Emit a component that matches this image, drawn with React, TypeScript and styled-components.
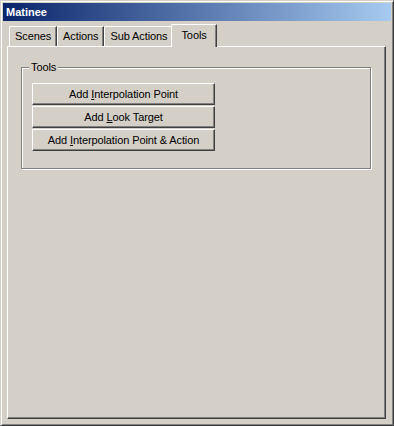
import styled, { createGlobalStyle } from 'styled-components'

const face = '#D4D0C8'
const shadow = '#808080'
const darkShadow = '#404040'

const GlobalStyle = createGlobalStyle`
  html, body {
    margin: 0;
    padding: 0;
    background: ${face};
  }
  body {
    font-family: 'Liberation Sans', Arial, sans-serif;
    font-size: 11px;
    letter-spacing: -0.1px;
    color: #000;
  }
`

const tabs = ['Scenes', 'Actions', 'Sub Actions', 'Tools']

export default function App() {
  return (
    <>
      <GlobalStyle />
      <Window>
        <TitleBar>Matinee</TitleBar>
        <Body>
          <TabStrip>
            {tabs.map((t) => (
              <Tab key={t} $active={t === 'Tools'}>
                {t}
              </Tab>
            ))}
          </TabStrip>
          <Panel>
            <GroupBox>
              <Legend>Tools</Legend>
              <Button>
                Add <u>I</u>nterpolation Point
              </Button>
              <Button>
                Add <u>L</u>ook Target
              </Button>
              <Button>
                Add <u>I</u>nterpolation Point &amp; Action
              </Button>
            </GroupBox>
          </Panel>
        </Body>
      </Window>
    </>
  )
}

const Window = styled.div`
  width: 394px;
  height: 426px;
  box-sizing: border-box;
  display: flex;
  flex-direction: column;
  background: ${face};
  border: 1px solid;
  border-color: ${face} ${darkShadow} ${darkShadow} ${face};
  box-shadow: inset 1px 1px #fff, inset -1px -1px ${shadow};
  padding: 2px;
`

const TitleBar = styled.div`
  height: 18px;
  line-height: 18px;
  padding-left: 3px;
  background: linear-gradient(to right, #0a246a, #a6caf0);
  color: #fff;
  font-weight: bold;
  font-size: 11px;
  letter-spacing: 0;
`

const Body = styled.div`
  flex: 1;
  display: flex;
  flex-direction: column;
  padding: 3px 5px 4px 4px;
`

const TabStrip = styled.div`
  display: flex;
  align-items: flex-end;
  height: 22px;
  padding-left: 2px;
  position: relative;
  z-index: 1;
`

const Tab = styled.div<{ $active?: boolean }>`
  box-sizing: border-box;
  height: ${({ $active }) => ($active ? '23px' : '20px')};
  margin: ${({ $active }) => ($active ? '0 -2px -1px -2px' : '0')};
  padding: ${({ $active }) => ($active ? '2px 9px 0 9px' : '1px 5px 0 5px')};
  line-height: 16px;
  background: ${face};
  border-top: 1px solid #fff;
  border-left: 1px solid #fff;
  border-right: 1px solid ${darkShadow};
  border-top-left-radius: 2px;
  box-shadow: inset -1px 0 ${shadow};
  position: relative;
  z-index: ${({ $active }) => ($active ? 2 : 1)};
`

const Panel = styled.div`
  flex: 1;
  box-sizing: border-box;
  border: 1px solid;
  border-color: #fff ${darkShadow} ${darkShadow} #fff;
  box-shadow: inset -1px -1px ${shadow};
  padding: 20px 14px 0 13px;
`

const GroupBox = styled.div`
  position: relative;
  box-sizing: border-box;
  width: 350px;
  height: 102px;
  border: 1px solid ${shadow};
  box-shadow: inset 1px 1px #fff, 1px 1px #fff;
  padding: 15px 0 0 10px;
  display: flex;
  flex-direction: column;
  gap: 1px;
`

const Legend = styled.span`
  position: absolute;
  top: -7px;
  left: 7px;
  padding: 0 2px 0 2px;
  background: ${face};
  line-height: 13px;
`

const Button = styled.button`
  box-sizing: border-box;
  width: 183px;
  height: 22px;
  margin: 0;
  padding: 0;
  font-family: 'Liberation Sans', Arial, sans-serif;
  font-size: 11px;
  letter-spacing: -0.1px;
  color: #000;
  background: ${face};
  border: 1px solid;
  border-color: #fff ${darkShadow} ${darkShadow} #fff;
  box-shadow: inset -1px -1px ${shadow};
  border-radius: 0;
  text-align: center;
`
